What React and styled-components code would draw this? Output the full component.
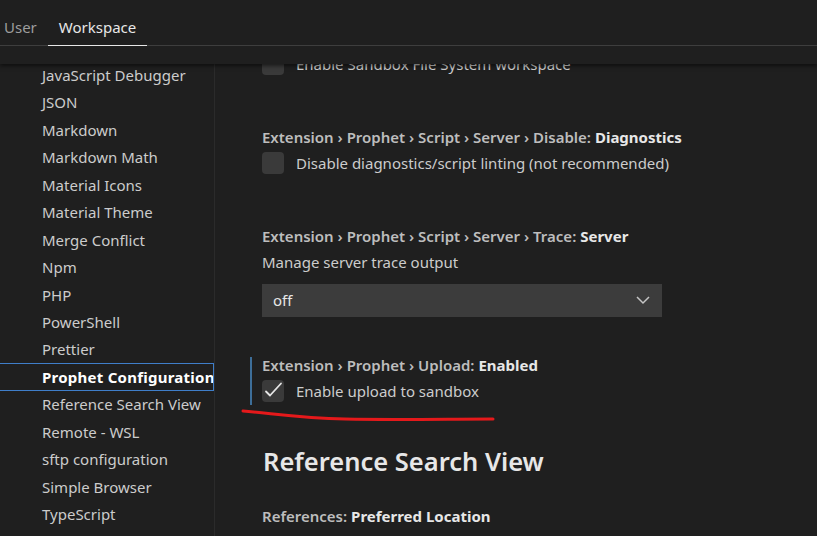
import React from 'react'
import styled, { createGlobalStyle } from 'styled-components'

const GlobalStyle = createGlobalStyle`
  html, body {
    margin: 0;
    padding: 0;
    background: #1f1f1f;
  }
  body {
    font-family: 'Noto Sans', 'Open Sans', sans-serif;
    color: #cccccc;
    overflow: hidden;
  }
`

const Page = styled.div`
  position: relative;
  width: 817px;
  height: 536px;
  overflow: hidden;
  background: #1f1f1f;
`

const Header = styled.div`
  position: relative;
  z-index: 2;
  background: #1f1f1f;
  box-shadow: 0 2px 4px rgba(0, 0, 0, 0.55);
`

const Tabs = styled.div`
  display: flex;
  height: 45px;
  margin-left: -7px;
  border-bottom: 1px solid #3e3e3e;
`

const Tab = styled.div`
  display: flex;
  align-items: center;
  padding: 8px 11px 0;
  font-size: 15px;
  color: ${p => (p.active ? '#e7e7e7' : '#9d9d9d')};
  border-bottom: 1px solid ${p => (p.active ? '#e7e7e7' : 'transparent')};
  margin-bottom: -1px;
`

const HeaderPad = styled.div`
  height: 18px;
`

const Body = styled.div`
  display: flex;
  height: 472px;
  overflow: hidden;
`

const Sidebar = styled.div`
  width: 214px;
  flex: none;
  border-right: 1px solid #2b2b2b;
  overflow: hidden;
`

const TocList = styled.div`
  margin-top: -2.7px;
`

const TocItem = styled.div`
  height: 27.44px;
  box-sizing: border-box;
  display: flex;
  align-items: center;
  padding-left: 42px;
  font-size: 15px;
  white-space: nowrap;
  overflow: hidden;
  color: ${p => (p.selected ? '#ffffff' : '#cccccc')};
  font-weight: ${p => (p.selected ? 700 : 400)};
  letter-spacing: ${p => (p.selected ? '0.25px' : 'normal')};
  border: 1px solid ${p => (p.selected ? '#3f7ec9' : 'transparent')};
  border-left: none;
`

const Main = styled.div`
  flex: 1;
  overflow: hidden;
  padding-left: 47px;
`

const Content = styled.div`
  margin-top: -36.5px;
`

const Setting = styled.div`
  position: relative;
  margin-bottom: 38px;

  ${p =>
    p.modified &&
    `
    &::before {
      content: '';
      position: absolute;
      left: -12px;
      top: 2px;
      bottom: 11px;
      width: 2px;
      background: #3d6e99;
    }
  `}
`

const Title = styled.div`
  height: 20px;
  line-height: 20px;
  font-size: 15px;
  font-weight: 600;
  color: #bdbdbd;
  white-space: nowrap;
`

const TitleKey = styled.span`
  color: #e7e7e7;
  font-weight: 700;
`

const Description = styled.div`
  line-height: 20px;
  margin-top: 6px;
  font-size: 15px;
  color: #cccccc;
`

const CheckRow = styled.div`
  display: flex;
  align-items: flex-start;
  gap: 12px;
  margin-top: 5px;
  height: 36px;
`

const CheckBox = styled.div`
  width: 22px;
  height: 22px;
  flex: none;
  border-radius: 4px;
  background: #3a3a3a;
  display: flex;
  align-items: center;
  justify-content: center;
`

const CheckLabel = styled.div`
  font-size: 15px;
  line-height: 22px;
  color: #cccccc;
  white-space: nowrap;
`

const Select = styled.div`
  display: flex;
  align-items: center;
  justify-content: space-between;
  width: 400px;
  height: 33px;
  margin-top: 12px;
  padding: 0 11px;
  box-sizing: border-box;
  background: #3c3c3c;
  font-size: 15px;
  color: #e7e7e7;
`

const SectionHeading = styled.h2`
  margin: -11px 0 27px;
  font-size: 25.5px;
  line-height: 36px;
  font-weight: 600;
  color: #e7e7e7;
  padding-left: 1px;
`

const Annotation = styled.svg`
  position: absolute;
  left: 0;
  top: 0;
  pointer-events: none;
  z-index: 3;
`

const Check = () => (
  <svg width="22" height="22" viewBox="0 0 22 22">
    <path d="M4 11.5 L8 15.5 L19 3.5" fill="none" stroke="#e6e6e6" strokeWidth="1.8" strokeLinecap="round" strokeLinejoin="round" />
  </svg>
)

const Chevron = () => (
  <svg width="16" height="10" viewBox="0 0 16 10">
    <path d="M2 2 L8 8 L14 2" fill="none" stroke="#c5c5c5" strokeWidth="1.5" />
  </svg>
)

const tocEntries = [
  'JavaScript Debugger',
  'JSON',
  'Markdown',
  'Markdown Math',
  'Material Icons',
  'Material Theme',
  'Merge Conflict',
  'Npm',
  'PHP',
  'PowerShell',
  'Prettier',
  'Prophet Configuration',
  'Reference Search View',
  'Remote - WSL',
  'sftp configuration',
  'Simple Browser',
  'TypeScript'
]

const BoolSetting = ({ path, name, label, checked, modified }) => (
  <Setting modified={modified}>
    <Title>
      {path} <TitleKey>{name}</TitleKey>
    </Title>
    <CheckRow>
      <CheckBox>{checked && <Check />}</CheckBox>
      <CheckLabel>{label}</CheckLabel>
    </CheckRow>
  </Setting>
)

const App = () => {
  return (
    <Page>
      <GlobalStyle />
      <Header>
        <Tabs>
          <Tab>User</Tab>
          <Tab active>Workspace</Tab>
        </Tabs>
        <HeaderPad />
      </Header>
      <Body>
        <Sidebar>
          <TocList>
            {tocEntries.map(entry => (
              <TocItem key={entry} selected={entry === 'Prophet Configuration'}>
                {entry}
              </TocItem>
            ))}
          </TocList>
        </Sidebar>
        <Main>
          <Content>
            <BoolSetting
              path="Extension › Prophet › Sandbox › Filesystem:"
              name="Enabled"
              label="Enable Sandbox File System workspace"
            />
            <BoolSetting
              path="Extension › Prophet › Script › Server › Disable:"
              name="Diagnostics"
              label="Disable diagnostics/script linting (not recommended)"
            />
            <Setting>
              <Title>
                Extension › Prophet › Script › Server › Trace: <TitleKey>Server</TitleKey>
              </Title>
              <Description>Manage server trace output</Description>
              <Select>
                <span>off</span>
                <Chevron />
              </Select>
            </Setting>
            <BoolSetting
              path="Extension › Prophet › Upload:"
              name="Enabled"
              label="Enable upload to sandbox"
              checked
              modified
            />
            <SectionHeading>Reference Search View</SectionHeading>
            <Setting>
              <Title>
                References: <TitleKey>Preferred Location</TitleKey>
              </Title>
            </Setting>
          </Content>
        </Main>
      </Body>
      <Annotation width="817" height="536">
        <path
          d="M243 411 C 270 413, 300 418, 345 419 S 450 419, 493 419"
          fill="none"
          stroke="#e5191b"
          strokeWidth="3"
          strokeLinecap="round"
        />
      </Annotation>
    </Page>
  )
}

export default App
